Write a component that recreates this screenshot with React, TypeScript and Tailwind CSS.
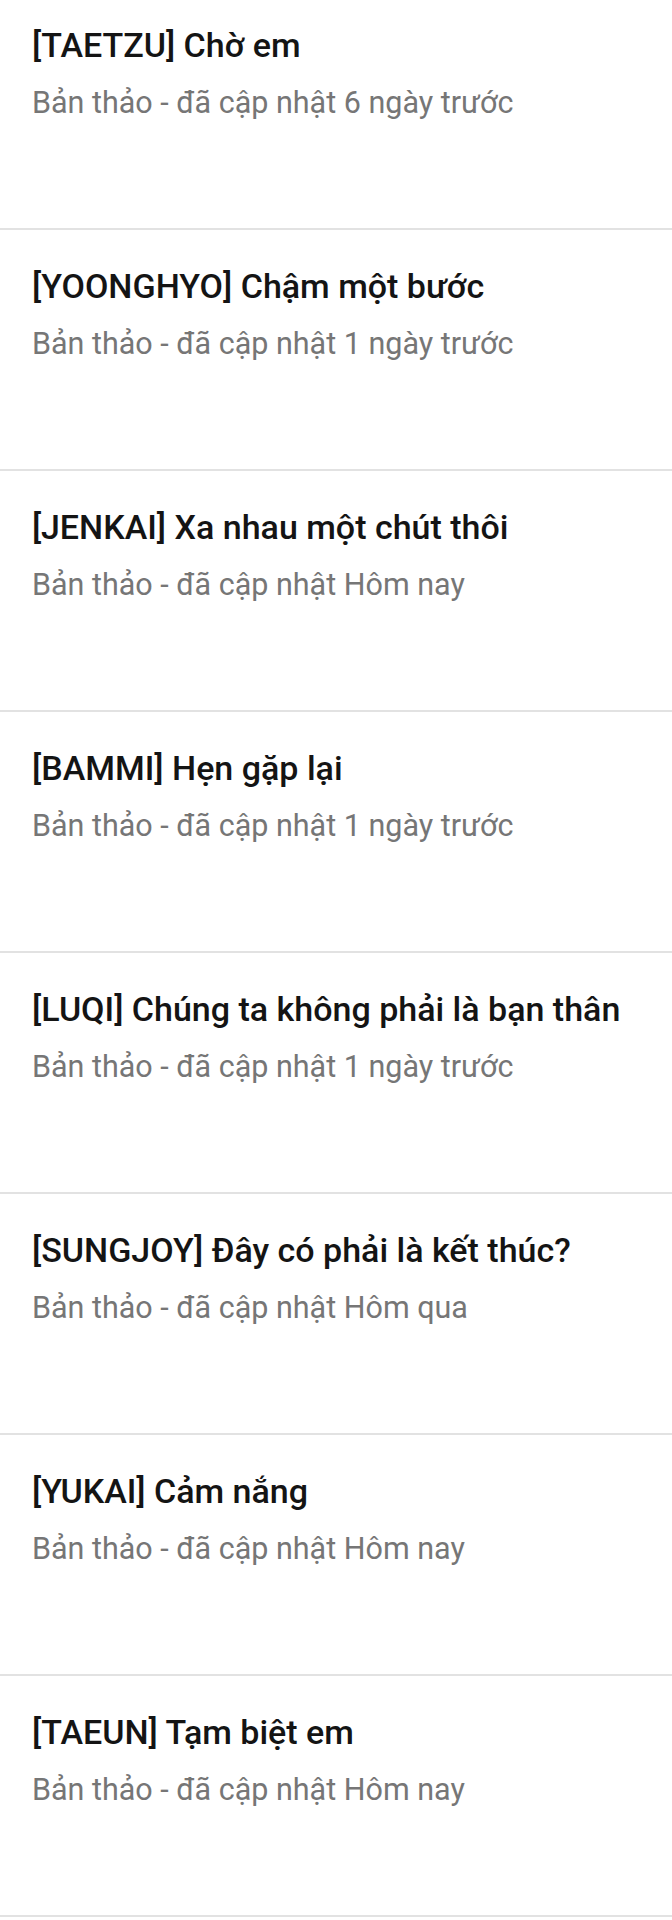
const drafts = [
  { title: "[TAETZU] Chờ em", updated: "6 ngày trước" },
  { title: "[YOONGHYO] Chậm một bước", updated: "1 ngày trước" },
  { title: "[JENKAI] Xa nhau một chút thôi", updated: "Hôm nay" },
  { title: "[BAMMI] Hẹn gặp lại", updated: "1 ngày trước" },
  { title: "[LUQI] Chúng ta không phải là bạn thân", updated: "1 ngày trước" },
  { title: "[SUNGJOY] Đây có phải là kết thúc?", updated: "Hôm qua" },
  { title: "[YUKAI] Cảm nắng", updated: "Hôm nay" },
  { title: "[TAEUN] Tạm biệt em", updated: "Hôm nay" },
];

export default function App() {
  return (
    <div className="min-h-[1920px] bg-white overflow-hidden font-['Roboto',sans-serif]">
      <ul className="-mt-[11px]">
        {drafts.map((d) => (
          <li key={d.title} className="h-[241px] border-b-2 border-[#e2e2e2] px-8 pt-9">
            <h3 className="text-[34px] leading-[40px] font-medium text-[#141414] whitespace-nowrap">
              {d.title}
            </h3>
            <p className="mt-5 text-[30.5px] leading-[36px] text-[#767676] whitespace-nowrap">
              Bản thảo - đã cập nhật {d.updated}
            </p>
          </li>
        ))}
      </ul>
    </div>
  );
}
